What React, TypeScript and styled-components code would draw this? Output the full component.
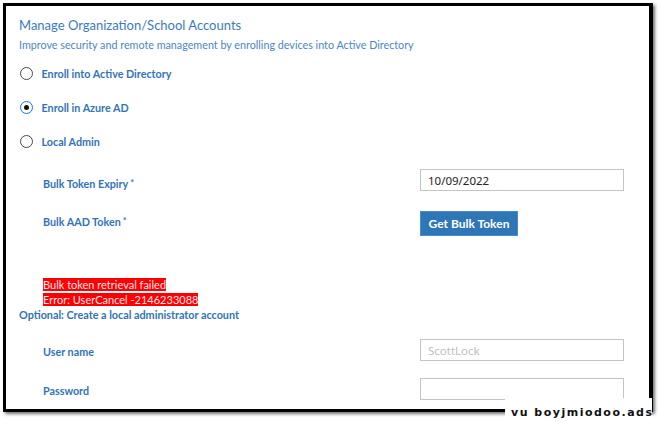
import styled, { createGlobalStyle } from "styled-components";

const GlobalStyles = createGlobalStyle`
  * {
    margin: 0;
    padding: 0;
    box-sizing: border-box;
  }
  body {
    background: #ffffff;
    font-family: Lato, "Noto Sans", sans-serif;
  }
`;

const BLUE = "#3173b9";

function Radio({ checked, label }: { checked?: boolean; label: string }) {
  return (
    <RadioRow>
      <RadioCircle $checked={checked} />
      <RadioLabel>{label}</RadioLabel>
    </RadioRow>
  );
}

function App() {
  return (
    <Page>
      <GlobalStyles />
      <Frame>
        <Title>Manage Organization/School Accounts</Title>
        <Subtitle>
          Improve security and remote management by enrolling devices into
          Active Directory
        </Subtitle>
        <RadioList>
          <Radio label="Enroll into Active Directory" />
          <Radio checked label="Enroll in Azure AD" />
          <Radio label="Local Admin" />
        </RadioList>
        <FieldRow $top={11}>
          <FieldLabel $shift={3}>
            Bulk Token Expiry<Star>*</Star>
          </FieldLabel>
          <TextInput defaultValue="10/09/2022" />
        </FieldRow>
        <FieldRow $top={20}>
          <FieldLabel $shift={-2}>
            Bulk AAD Token<Star>*</Star>
          </FieldLabel>
          <Button>Get Bulk Token</Button>
        </FieldRow>
        <ErrorBlock>
          <ErrorLine>Bulk token retrieval failed</ErrorLine>
          <br />
          <ErrorLine>Error: UserCancel -2146233088</ErrorLine>
        </ErrorBlock>
        <Optional>Optional: Create a local administrator account</Optional>
        <FieldRow $top={17}>
          <FieldLabel $shift={1}>User name</FieldLabel>
          <TextInput placeholder="ScottLock" />
        </FieldRow>
        <FieldRow $top={17}>
          <FieldLabel $shift={1}>Password</FieldLabel>
          <TextInput type="password" />
        </FieldRow>
        <Watermark>vu boyjmiodoo.ads</Watermark>
      </Frame>
    </Page>
  );
}

export default App;

const Page = styled.div`
  width: 661px;
  height: 422px;
  padding: 3px 0 0 3px;
  overflow: hidden;
`;

const Frame = styled.div`
  position: relative;
  width: 650px;
  height: 409px;
  border: 3px solid #000;
  border-right-width: 4px;
  box-shadow: 2px 2px 3px rgba(0, 0, 0, 0.55);
  padding: 9px 0 0 13px;
  color: ${BLUE};
`;

const Title = styled.h1`
  font-size: 13px;
  line-height: 20px;
  font-weight: 400;
  color: #3a7bc2;
`;

const Subtitle = styled.p`
  margin-top: 2px;
  font-size: 10.75px;
  line-height: 16px;
  color: #4a86c8;
`;

const RadioList = styled.div`
  margin-top: 3px;
  display: flex;
  flex-direction: column;
`;

const RadioRow = styled.label`
  display: flex;
  align-items: center;
  height: 34px;
  gap: 9px;
  padding-left: 0.5px;
`;

const RadioCircle = styled.span<{ $checked?: boolean }>`
  width: 13px;
  height: 13px;
  border-radius: 50%;
  border: 1.6px solid ${(p) => (p.$checked ? "#1a73e8" : "#4a4a4a")};
  display: flex;
  align-items: center;
  justify-content: center;
  &::after {
    content: "";
    width: 5px;
    height: 5px;
    border-radius: 50%;
    background: ${(p) => (p.$checked ? "#111" : "transparent")};
  }
`;

const RadioLabel = styled.span`
  font-size: 10.75px;
  font-weight: 700;
  color: ${BLUE};
`;

const FieldRow = styled.div<{ $top: number }>`
  margin-top: ${(p) => p.$top}px;
  display: flex;
  align-items: center;
  padding-left: 24px;
`;

const FieldLabel = styled.span<{ $shift: number }>`
  width: 377px;
  position: relative;
  top: ${(p) => p.$shift}px;
  font-size: 10.75px;
  font-weight: 700;
  color: ${BLUE};
`;

const Star = styled.span`
  margin-left: 2px;
  font-size: 9px;
  vertical-align: top;
`;

const TextInput = styled.input`
  width: 204px;
  height: 22px;
  border: 1px solid #c4c4c4;
  padding: 0 7px;
  font-family: "Noto Sans", sans-serif;
  font-size: 11.5px;
  color: #222;
  outline: none;
  &::placeholder {
    color: #c0c0c0;
  }
`;

const Button = styled.button`
  width: 98px;
  height: 25px;
  background: #2f76b7;
  border: 1px solid #4a8ccc;
  color: #ffffff;
  font-family: Lato, sans-serif;
  font-size: 12px;
  font-weight: 700;
`;

const ErrorBlock = styled.div`
  margin-top: 41px;
  padding-left: 24px;
  font-size: 11px;
  line-height: 15px;
`;

const ErrorLine = styled.span`
  background: #ff0000;
  color: #fde6ef;
`;

const Optional = styled.p`
  font-size: 10.8px;
  line-height: 15px;
  font-weight: 700;
  color: ${BLUE};
`;

const Watermark = styled.div`
  position: absolute;
  left: 499px;
  bottom: -11px;
  width: 147px;
  height: 22px;
  background: #ffffff;
  color: #111;
  font-family: "DejaVu Sans", sans-serif;
  font-weight: 700;
  font-size: 11px;
  line-height: 14px;
  letter-spacing: 1.5px;
  white-space: nowrap;
  padding: 8px 0 0 6px;
`;
